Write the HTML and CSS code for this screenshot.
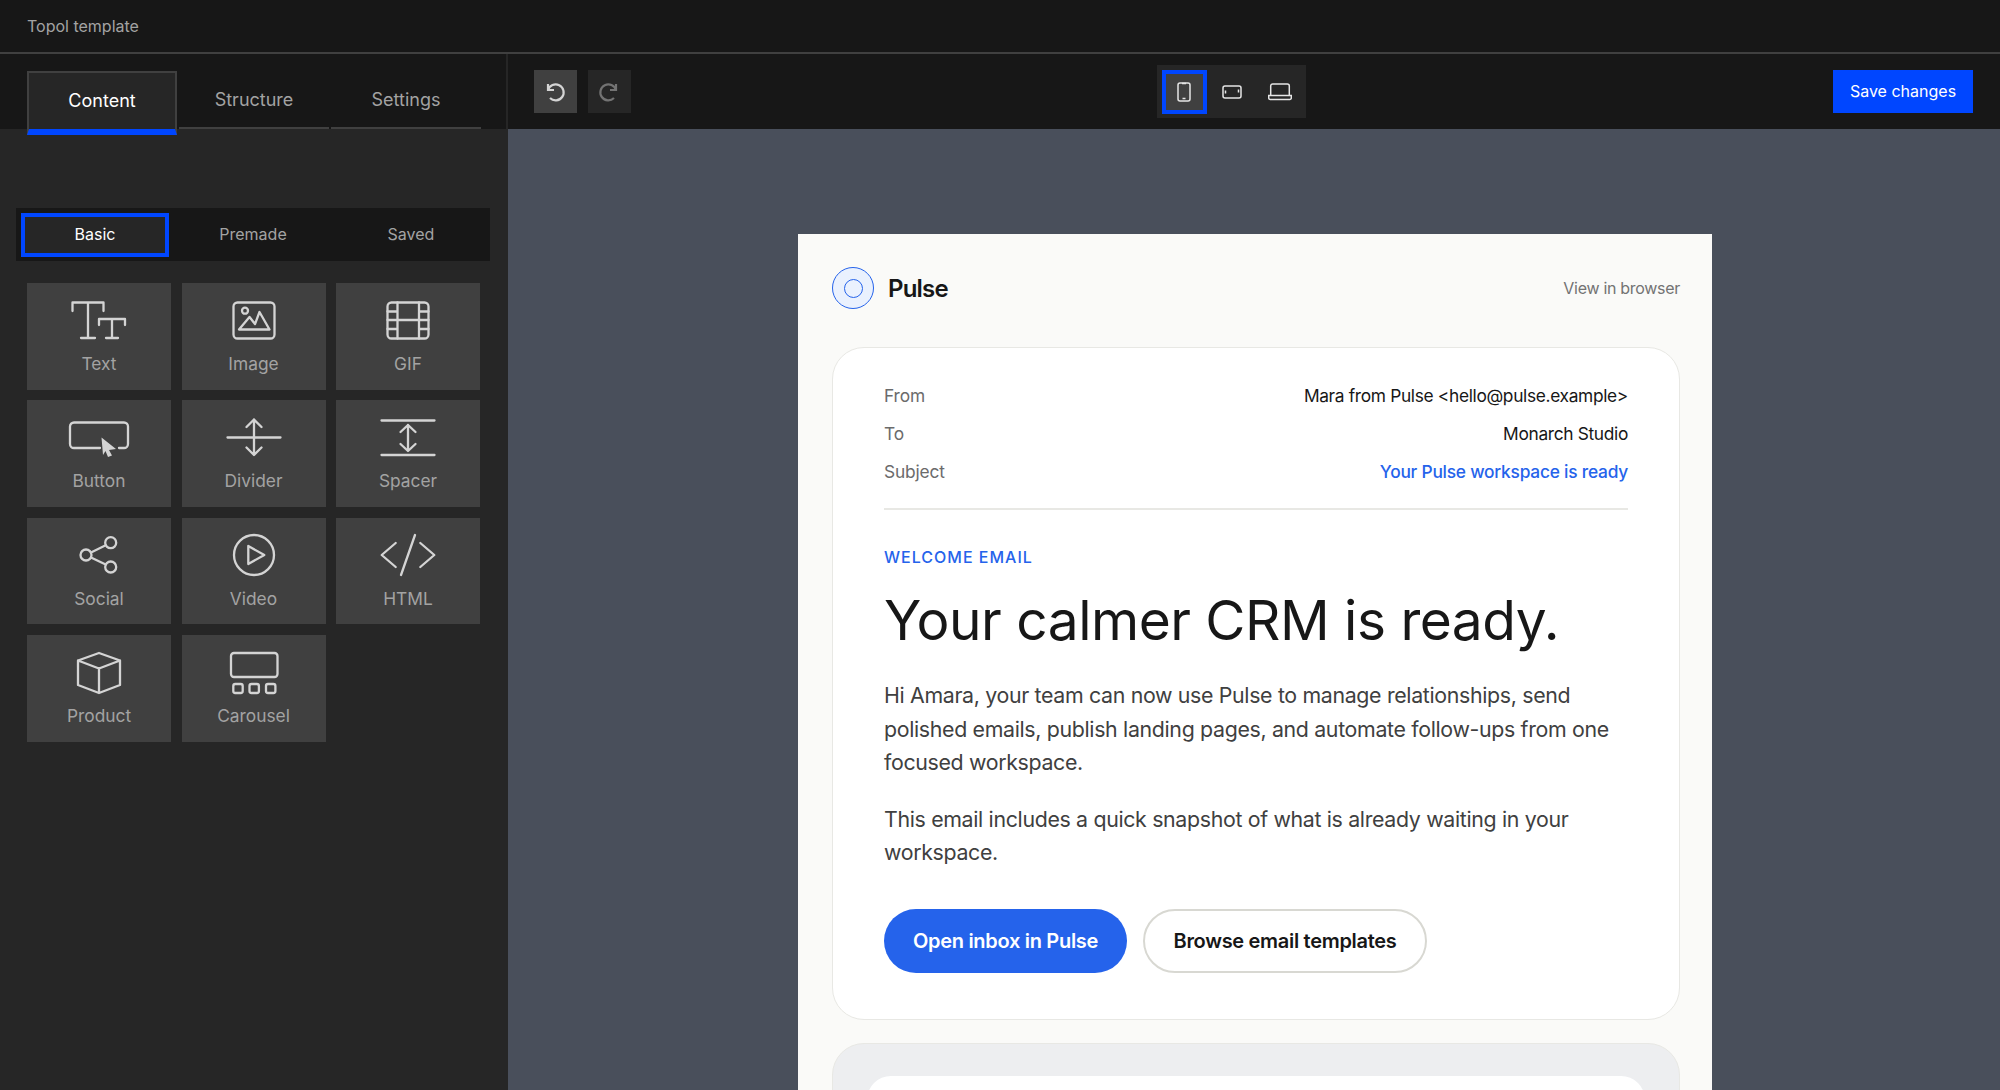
FILE: index.html
```html
<!DOCTYPE html>
<html lang="en">
<head>
<meta charset="utf-8">
<title>Topol template</title>
<link rel="stylesheet" href="styles.css">
</head>
<body>
<header class="topbar">Topol template</header>
<div class="workspace">
  <aside class="sidebar">
    <div class="tabs-wrap">
      <nav class="tabs">
        <div class="tab active">Content</div>
        <div class="tab">Structure</div>
        <div class="tab">Settings</div>
      </nav>
    </div>
    <div class="subtabs">
      <div class="subtab active">Basic</div>
      <div class="subtab">Premade</div>
      <div class="subtab">Saved</div>
    </div>
    <div class="blocks">
      <div class="block"><svg viewBox="0 0 64 40"><path d="M5.500 11V2.500H36.500V11M21 2.500V38M14 38H28"/><path d="M32 25V19H58V25M45 19V38M39 38H51"/></svg><span>Text</span></div>
      <div class="block"><svg viewBox="0 0 64 40"><rect x="11.500" y="2.500" width="41" height="36" rx="4"/><circle cx="23" cy="10.700" r="3"/><path d="M17 29.500L27.500 17L33 24L37.500 12L47.500 29.500Z"/></svg><span>Image</span></div>
      <div class="block"><svg viewBox="0 0 64 40"><rect x="11.500" y="2.500" width="41" height="36" rx="4"/><path d="M21.500 2.500V38.500M43 2.500V38.500M21.500 20H43M11.500 11.500H21.500M11.500 20H21.500M11.500 29H21.500M43 11.500H52.500M43 20H52.500M43 29H52.500"/></svg><span>GIF</span></div>
      <div class="block"><svg viewBox="0 0 64 40"><path d="M33 31H7a4 4 0 0 1-4-4V9.500a4 4 0 0 1 4-4h50a4 4 0 0 1 4 4V27a4 4 0 0 1-4 4h-5"/><path class="fill" d="M34.500 20.500L49 32L42 33L45 38.500L41 40L38.500 34L36 38Z"/></svg><span>Button</span></div>
      <div class="block"><svg viewBox="0 0 64 40"><path d="M5.500 20.500H58.500M32 2.500V38M24.500 10L32 2.500L39.500 10M24.500 30.500L32 38L39.500 30.500"/></svg><span>Divider</span></div>
      <div class="block"><svg viewBox="0 0 64 40"><path d="M5.500 3.500H58.500M5.500 38H58.500M32 8V34M24.500 15L32 8L39.500 15M24.500 27L32 34L39.500 27"/></svg><span>Spacer</span></div>
      <div class="block"><svg viewBox="0 0 64 40"><circle cx="43.700" cy="7.700" r="5.500"/><circle cx="43.700" cy="32" r="5.500"/><circle cx="19" cy="20" r="5.500"/><path d="M24 17.500L38.700 10.300M24 22.500L38.700 29.500"/></svg><span>Social</span></div>
      <div class="block"><svg viewBox="0 0 64 40"><circle cx="32" cy="20" r="20"/><path d="M26.300 11L42.300 20L26.300 29Z"/></svg><span>Video</span></div>
      <div class="block"><svg viewBox="0 0 64 40"><path d="M19.700 8L5.700 20L19.700 32M44.300 8L58.300 20L44.300 32M39 0L25 40"/></svg><span>HTML</span></div>
      <div class="block"><svg viewBox="0 0 64 40"><path d="M32 1L53 8.500V33L32 41L11 33V8.500ZM11 8.500L32 16.500L53 8.500M32 16.500V41"/></svg><span>Product</span></div>
      <div class="block"><svg viewBox="0 0 64 40"><rect x="9" y="1" width="46.500" height="24" rx="3"/><rect x="11.300" y="32" width="9.400" height="9" rx="2"/><rect x="27.500" y="32" width="9.400" height="9" rx="2"/><rect x="44" y="32" width="9.400" height="9" rx="2"/></svg><span>Carousel</span></div>
    </div>
  </aside>
  <main class="stage">
    <div class="toolbar">
      <div class="history">
        <button class="icon-btn"><svg viewBox="0 0 24 24"><path d="M5 4v6h6M5 10a8 8 0 1 1 2 8"/></svg></button>
        <button class="icon-btn off"><svg viewBox="0 0 24 24"><path d="M19 4v6h-6M19 10a8 8 0 1 0-2 8"/></svg></button>
      </div>
      <div class="devices">
        <button class="device active"><svg viewBox="0 0 24 24"><rect x="6" y="3" width="12" height="18" rx="2"/><path d="M10 3.500h4M10.500 18.500h3"/></svg></button>
        <button class="device"><svg viewBox="0 0 24 24"><rect x="3" y="6" width="18" height="12" rx="2"/><path d="M5.500 10.500v3M18.500 9.500v3"/></svg></button>
        <button class="device"><svg viewBox="0 0 24 24"><path d="M2.700 15.500V6a2 2 0 0 1 2-2h14.600a2 2 0 0 1 2 2v9.500M0.700 15.500h22.600v2.500a1.500 1.500 0 0 1-1.500 1.500H2.200a1.500 1.500 0 0 1-1.500-1.500z"/></svg></button>
      </div>
      <button class="save">Save changes</button>
    </div>
    <div class="canvas">
      <article class="paper">
        <div class="brand-row">
          <div class="brand"><span class="logo"><i></i></span><b>Pulse</b></div>
          <span class="view">View in browser</span>
        </div>
        <section class="card">
          <dl class="meta">
            <div><dt>From</dt><dd>Mara from Pulse &lt;hello@pulse.example&gt;</dd></div>
            <div><dt>To</dt><dd>Monarch Studio</dd></div>
            <div><dt>Subject</dt><dd class="subject">Your Pulse workspace is ready</dd></div>
          </dl>
          <p class="eyebrow">WELCOME EMAIL</p>
          <h1>Your calmer CRM is ready.</h1>
          <p class="body">Hi Amara, your team can now use Pulse to manage relationships, send polished emails, publish landing pages, and automate follow-ups from one focused workspace.</p>
          <p class="body">This email includes a quick snapshot of what is already waiting in your workspace.</p>
          <div class="cta">
            <a class="btn primary">Open inbox in Pulse</a>
            <a class="btn ghost">Browse email templates</a>
          </div>
        </section>
        <section class="snapshot"><div class="snapshot-inner"></div></section>
      </article>
    </div>
  </main>
</div>
</body>
</html>
```
FILE: styles.css
```css
* { box-sizing: border-box; }
html, body { height: 100%; margin: 0; overflow: hidden; }
body { background: #171717; font-family: Inter, "Liberation Sans", sans-serif; display: flex; flex-direction: column; }
button { font-family: inherit; border: 0; padding: 0; }

.topbar { height: 54px; flex: none; padding-left: 27px; display: flex; align-items: center; font-size: 16px; color: #a3a3a3; border-bottom: 2px solid #404040; }
.workspace { flex: 1; display: flex; min-height: 0; }

.sidebar { width: 508px; flex: none; background: #262626; }
.tabs-wrap { background: #171717; height: 75px; padding: 17px 27px 0; border-right: 2px solid #262626; }
.tabs { display: flex; align-items: flex-start; gap: 2px; width: 454px; }
.tab { width: 150px; height: 58px; display: flex; align-items: center; justify-content: center; padding-top: 1px; font-size: 18px; color: #a3a3a3; border-bottom: 2px solid #404040; }
.tab.active { height: 64px; padding: 0 0 2px; background: #262626; color: #fff; border: 2px solid #404040; border-bottom: 6px solid #0046ff; }

.subtabs { margin: 79px 0 0 16px; width: 474px; height: 53px; padding: 5px; background: #171717; display: flex; gap: 10px; }
.subtab { width: 148px; height: 44px; padding-bottom: 2px; display: flex; align-items: center; justify-content: center; font-size: 16px; color: #a3a3a3; }
.subtab.active { background: #262626; color: #fff; border: 4px solid #0046ff; }

.blocks { margin: 22px 0 0 27px; width: 453px; display: grid; grid-template-columns: repeat(3, 144px); grid-auto-rows: 106.670px; gap: 10.670px 10.500px; }
.block { background: #404040; display: flex; flex-direction: column; align-items: center; padding-top: 17px; font-size: 17.330px; color: #a3a3a3; }
.block svg { height: 40px; width: 64px; overflow: visible; flex: none; fill: none; stroke: #d4d4d4; stroke-width: 2.300; stroke-linecap: round; stroke-linejoin: round; }
.block svg .fill { fill: #d4d4d4; stroke: none; }
.block span { margin-top: 13px; line-height: 22px; }

.stage { flex: 1; min-width: 0; display: flex; flex-direction: column; }
.toolbar { height: 75px; flex: none; padding: 16px 27px 0 26px; display: flex; align-items: flex-start; justify-content: space-between; position: relative; background: #171717; }
.history { display: flex; gap: 11px; }
.icon-btn { width: 43px; height: 43px; background: #404040; display: flex; align-items: center; justify-content: center; }
.icon-btn.off { background: #262626; }
.icon-btn svg { width: 24px; height: 24px; margin-right: 1px; fill: none; stroke: #d4d4d4; stroke-width: 2.200; }
.icon-btn.off svg { stroke: #737373; }
.devices { position: absolute; left: 649px; top: 11px; width: 149px; height: 53px; background: #262626; padding: 5px 2px 5px 5px; display: flex; gap: 3px; }
.device { width: 45px; height: 44px; flex: none; background: transparent; display: flex; align-items: center; justify-content: center; }
.device.active { background: #404040; border: 4px solid #0046ff; }
.device svg { width: 24px; height: 24px; margin-right: 1px; fill: none; stroke: #e5e5e5; stroke-width: 1.500; }
.save { width: 140px; height: 43px; padding-bottom: 2px; background: #0046ff; color: #fff; font-size: 16px; }

.canvas { flex: 1; min-height: 0; background: #494f5b; padding: 105px 0 0 290px; overflow: hidden; }
.paper { width: 914px; background: #fafaf8; padding: 33px 32px 40px 34px; }
.brand-row { display: flex; align-items: center; justify-content: space-between; height: 42px; }
.brand { display: flex; align-items: center; gap: 14px; }
.brand b { font-size: 24px; font-weight: 600; color: #171717; letter-spacing: -0.800px; }
.logo { width: 42px; height: 42px; border-radius: 50%; background: #eaf1fe; border: 1.500px solid #2563eb; display: flex; align-items: center; justify-content: center; }
.logo i { width: 19px; height: 19px; border-radius: 50%; border: 1.500px solid #2563eb; }
.view { font-size: 16px; letter-spacing: -0.300px; color: #737373; }

.card { margin-top: 38px; height: 673px; background: #fff; border: 1.500px solid #e8e8e4; border-radius: 32px; padding: 28px 51px 0 51px; }
.meta { margin: 0; padding-bottom: 18px; border-bottom: 2px solid #e8e8e4; }
.meta div { display: flex; justify-content: space-between; height: 38px; align-items: center; font-size: 17.330px; }
.meta dt { color: #6b6b6b; letter-spacing: -0.150px; }
.meta dd { margin: 0; color: #171717; letter-spacing: -0.330px; }
.meta .subject { color: #2563eb; font-weight: 500; letter-spacing: -0.220px; }
.eyebrow { margin: 35px 0 0; font-size: 16px; line-height: 24px; font-weight: 500; letter-spacing: 1px; color: #2563eb; }
h1 { margin: 19px 0 0; font-size: 55px; line-height: 64px; font-weight: 400; letter-spacing: -0.500px; color: #171717; }
.body { margin: 27px 0 0; font-size: 21.330px; line-height: 33.600px; letter-spacing: -0.330px; color: #404040; }
.body + .body { margin-top: 23px; }
.cta { margin-top: 39px; display: flex; gap: 16px; }
.btn { height: 64px; display: flex; align-items: center; justify-content: center; border-radius: 32px; font-size: 20px; font-weight: 600; letter-spacing: -0.300px; }
.primary { width: 243px; background: #2563eb; color: #fff; }
.ghost { width: 284px; background: #fff; color: #171717; border: 2px solid #d8d8d2; }

.snapshot { margin-top: 23px; height: 200px; background: #edeef0; border: 1.500px solid #e8e8e4; border-radius: 32px; padding: 32px 34px; }
.snapshot-inner { height: 150px; background: #fff; border-radius: 24px; }
```
